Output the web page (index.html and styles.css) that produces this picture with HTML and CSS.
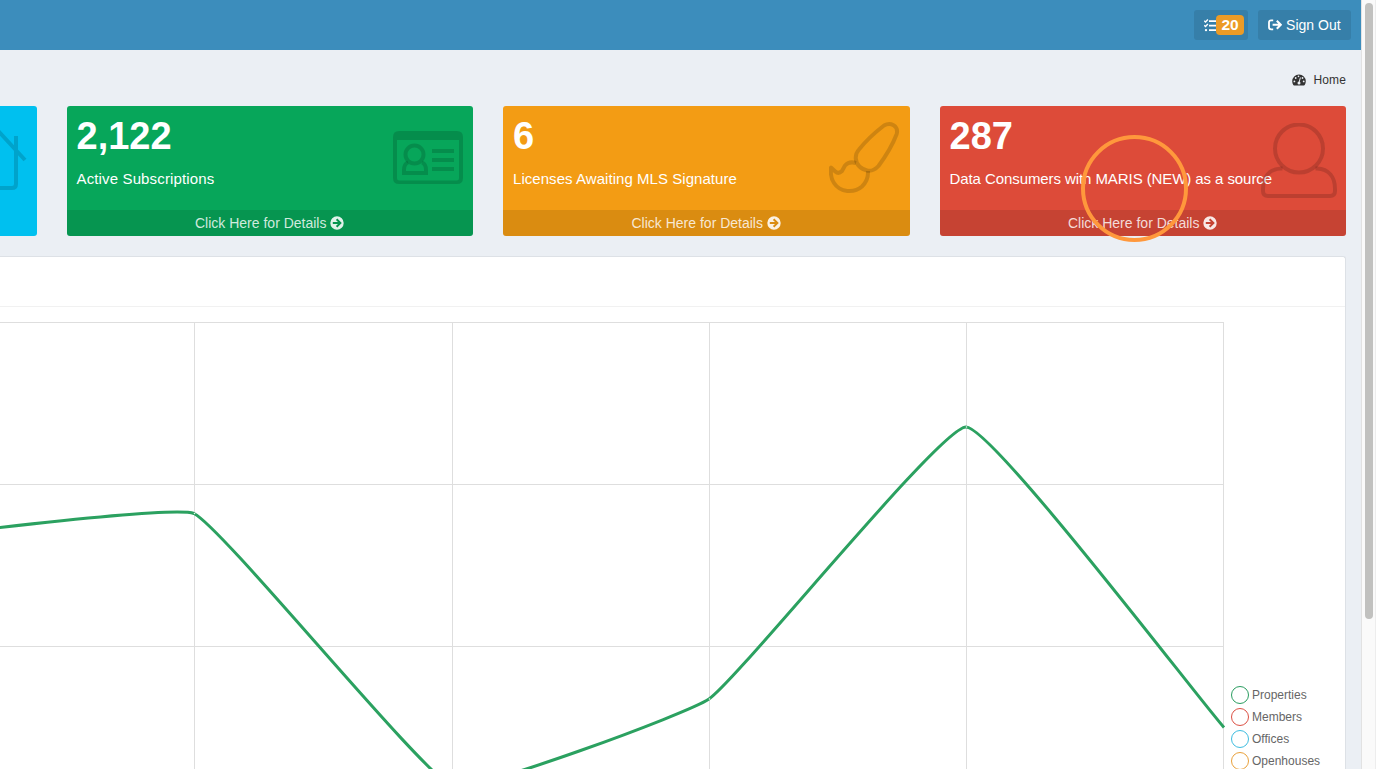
FILE: index.html
```html
<!DOCTYPE html>
<html lang="en">
<head>
<meta charset="utf-8">
<title>Dashboard</title>
<link rel="stylesheet" href="styles.css">
</head>
<body>
<svg class="symbols" aria-hidden="true">
  <symbol id="go" viewBox="0 0 14 14"><path fill-rule="evenodd" d="M7 .3a6.700 6.700 0 1 0 0 13.400A6.700 6.700 0 0 0 7 .3zM7.300 2.500l4.500 4.500-4.500 4.500-1.400-1.400 2.100-2.100H2.800V6H8L5.900 3.900z"/></symbol>
</svg>
<div class="page">
  <div class="main">
    <header class="navbar">
      <a class="nav-btn tasks">
        <svg width="13" height="13" viewBox="0 0 13 13"><path d="M5 2.100h8M5 6.600h8M5 11.100h8" stroke="#fff" stroke-width="1.900"/><path d="M.3 1.800l1.200 1.200L3.900.5M.3 6.300l1.200 1.200L3.900 5" fill="none" stroke="#fff" stroke-width="1.400"/><circle cx="2" cy="11.100" r="1.200" fill="#fff"/></svg><span class="badge">20</span>
      </a>
      <a class="nav-btn signout">
        <svg width="14" height="12" viewBox="0 0 14 12"><path d="M5.200 1.300H3.200Q1 1.300 1 3.300v5Q1 10.300 3.200 10.300h2" fill="none" stroke="#fff" stroke-width="1.800"/><path d="M4.600 5.800h7.600M8.800 1.800l4 4-4 4" fill="none" stroke="#fff" stroke-width="2.100"/></svg>
        <span>Sign Out</span>
      </a>
    </header>
    <nav class="crumb">
      <svg width="14" height="12" viewBox="0 0 14 12"><path d="M7 .4a6.800 6.800 0 0 0-6.800 6.800c0 1.500.4 2.800 1.100 3.900.2.3.4.4.7.4h10c.3 0 .5-.1.7-.4.7-1.100 1.100-2.400 1.100-3.900A6.800 6.800 0 0 0 7 .4z" fill="#333"/><path d="M8.400 3.500L7.200 8" stroke="#ebeff4" stroke-width="1"/><g fill="#ebeff4"><circle cx="7" cy="9" r="1.500"/><circle cx="2.400" cy="7.400" r=".9"/><circle cx="3.700" cy="4" r=".9"/><circle cx="6.500" cy="2.400" r=".8"/><circle cx="10.500" cy="4" r=".9"/><circle cx="11.700" cy="7.400" r=".9"/></g></svg>
      <span>Home</span>
    </nav>
    <section class="cards">
      <article class="card blue">
        <svg class="art house" width="76" height="76" viewBox="0 0 76 76"><path d="M2 36L38 3l35 38M10 30v36q0 3 3 3h47q4 0 4-4V17M31 69V46h15v23" fill="none" stroke="currentColor" stroke-width="4"/></svg>
        <div class="body"></div>
      </article>
      <article class="card green">
        <svg class="art idcard" width="70" height="54" viewBox="0 0 70 54"><path fill-rule="evenodd" fill="currentColor" d="M6 0h58q6 0 6 6v41q0 6-6 6H6q-6 0-6-6V6q0-6 6-6zM4 9v38q0 2.500 2.500 2.500h57Q66 49.500 66 47V9z"/><g fill="none" stroke="currentColor" stroke-width="4"><circle cx="21.500" cy="23.500" r="9"/><path d="M15 31.500Q11 33 11 39v3h22v-3q0-6-4-7.500M39 20h22M39 29h22M39 38h22"/></g></svg>
        <div class="body"><h3>2,122</h3><p class="wide">Active Subscriptions</p></div>
        <a class="more">Click Here for Details <svg width="14" height="14"><use href="#go"/></svg></a>
      </article>
      <article class="card orange">
        <svg class="art brush" width="72" height="72" viewBox="0 0 72 72"><g fill="none" stroke="currentColor" stroke-width="4" stroke-linejoin="round"><path d="M55 3.500Q60 .7 64.500 3.200 69.500 6.500 67.500 12.500 62 27 49.500 44 44.500 49.500 38.800 48.700 27.500 46 26.700 36 26.700 31 30 27.500 40 15 55 3.500z"/><path d="M27 41Q20 39 16 43.500L13 49q-3.500 3.500-7 .2L2 45.500Q1 55 5 61c6 9.500 20 10.500 28 3.500q6.500-6 6-15.500"/></g></svg>
        <div class="body"><h3>6</h3><p class="mid">Licenses Awaiting MLS Signature</p></div>
        <a class="more">Click Here for Details <svg width="14" height="14"><use href="#go"/></svg></a>
      </article>
      <article class="card red">
        <svg class="art person" width="76" height="76" viewBox="0 0 76 76"><g fill="none" stroke="currentColor" stroke-width="4"><circle cx="38" cy="25.500" r="24"/><path d="M21.500 45.500H20C8 46 2 54 2 66v2q0 5 5 5h62q5 0 5-5v-2c0-12-6-20-18-20.500h-1.500"/></g></svg>
        <div class="body"><h3>287</h3><p class="tight">Data Consumers with MARIS (NEW) as a source</p></div>
        <a class="more">Click Here for Details <svg width="14" height="14"><use href="#go"/></svg></a>
      </article>
    </section>
    <section class="panel">
      <div class="panel-head"></div>
      <div class="panel-body">
        <svg class="chart" width="1226" height="462" viewBox="0 307 1226 462">
          <path d="M0 322.500H1223.500M0 484.500H1223.500M0 646.500H1223.500M194.500 322V769M452.500 322V769M709.500 322V769M966.500 322V769M1223.500 322V769" stroke="#dedede" fill="none"/>
          <path d="M-63 535C-38 532 173 506 194 513.500C224 529 424 776 453 787C474 792 687 714 709 699C739 678 941 427 966 427C992 427 1197 697 1224 727.500" fill="none" stroke="#2ba160" stroke-width="3"/>
          <g fill="#e6f4ec"><circle cx="194.500" cy="513.500" r=".8"/><circle cx="709.500" cy="699" r=".8"/><circle cx="966.500" cy="427" r=".8"/></g>
        </svg>
        <ul class="legend">
          <li><i class="dot g"></i>Properties</li>
          <li><i class="dot r"></i>Members</li>
          <li><i class="dot b"></i>Offices</li>
          <li><i class="dot o"></i>Openhouses</li>
        </ul>
      </div>
    </section>
  </div>
  <div class="scrollbar"><div class="thumb"></div></div>
  <div class="click-ring"></div>
</div>
</body>
</html>
```
FILE: styles.css
```css
* { box-sizing: border-box; }
body { margin: 0; font-family: "Liberation Sans", Arial, sans-serif; color: #333; }
.symbols { display: none; }
.page { position: relative; display: flex; width: 1376px; height: 769px; overflow: hidden; background: #ebeff4; }
.main { width: 1361px; display: flex; flex-direction: column; overflow: hidden; }
.navbar { height: 50px; flex: none; background: #3c8dbc; display: flex; justify-content: flex-end; align-items: center; gap: 10px; padding-right: 10px; }
.nav-btn { display: flex; align-items: center; height: 30px; border-radius: 3px; background: #367fa9; color: #fff; font-size: 14px; white-space: nowrap; }
.tasks { width: 54px; padding-left: 10px; }
.badge { margin-left: -1px; width: 28px; height: 20px; line-height: 20px; border-radius: 4px; background: #ec9b26; font-size: 15.5px; font-weight: bold; text-align: center; }
.signout { width: 93px; padding-left: 10px; gap: 4px; letter-spacing: .04px; }
.crumb { height: 56px; flex: none; display: flex; justify-content: flex-end; align-items: center; gap: 8px; padding: 3px 15px 0 0; font-size: 12px; letter-spacing: .1px; }
.cards { display: flex; justify-content: flex-end; gap: 30px; height: 130px; flex: none; padding-right: 15px; }
.card { position: relative; width: 406.5px; flex: none; display: flex; flex-direction: column; border-radius: 3px; overflow: hidden; color: #fff; }
.blue { background: #00c0ef; }
.green { background: #07a65a; }
.orange { background: #f39c14; }
.red { background: #dd4b39; }
.body { flex: 1; padding: 9px 10px; }
.body h3 { margin: 0; font-size: 38px; line-height: 42px; font-weight: bold; }
.body p { margin: 12px 0 0; font-size: 15px; line-height: 20px; white-space: nowrap; }
.body .wide { letter-spacing: .14px; }
.body .mid { letter-spacing: .05px; }
.body .tight { letter-spacing: -.08px; }
.more { position: relative; height: 26px; background: rgba(0,0,0,.1); color: rgba(255,255,255,.82); display: flex; justify-content: center; align-items: center; gap: 4px; font-size: 14px; }
.more svg { fill: #fff; fill-opacity: .88; }
.art { position: absolute; color: rgba(0,0,0,.15); }
.house { right: 9px; top: 13px; }
.idcard { right: 10px; top: 25px; }
.brush { right: 9px; top: 16px; }
.person { right: 9px; top: 17px; }
.panel { flex: 1; margin: 20px 15px 0 0; border: 1px solid #dde1e6; border-left: 0; border-bottom: 0; border-radius: 0 3px 0 0; background: #fff; }
.panel-head { height: 50px; border-bottom: 1px solid #f1f1f1; }
.panel-body { display: flex; height: 462px; overflow: hidden; }
.chart { flex: none; }
.legend { list-style: none; margin: 0; padding: 377px 0 0 5px; font-size: 12px; color: #666; }
.legend li { display: flex; align-items: center; height: 22px; gap: 3px; white-space: nowrap; }
.dot { width: 18px; height: 18px; border: 1px solid; border-radius: 50%; }
.g { border-color: #2a9d60; }
.r { border-color: #dc5145; }
.b { border-color: #3fbde0; }
.o { border-color: #e9a13b; }
.scrollbar { width: 15px; padding: 3px 0 0 3px; border-left: 1px solid #e2e2e2; border-right: 1px solid #ededed; background: #fafafa; }
.thumb { width: 8px; height: 616px; border-radius: 4px; background: #c1c1bf; }
.click-ring { position: absolute; left: 1081px; top: 135px; width: 107px; height: 107px; border: 4.5px solid #ff983c; border-radius: 50%; }
```
